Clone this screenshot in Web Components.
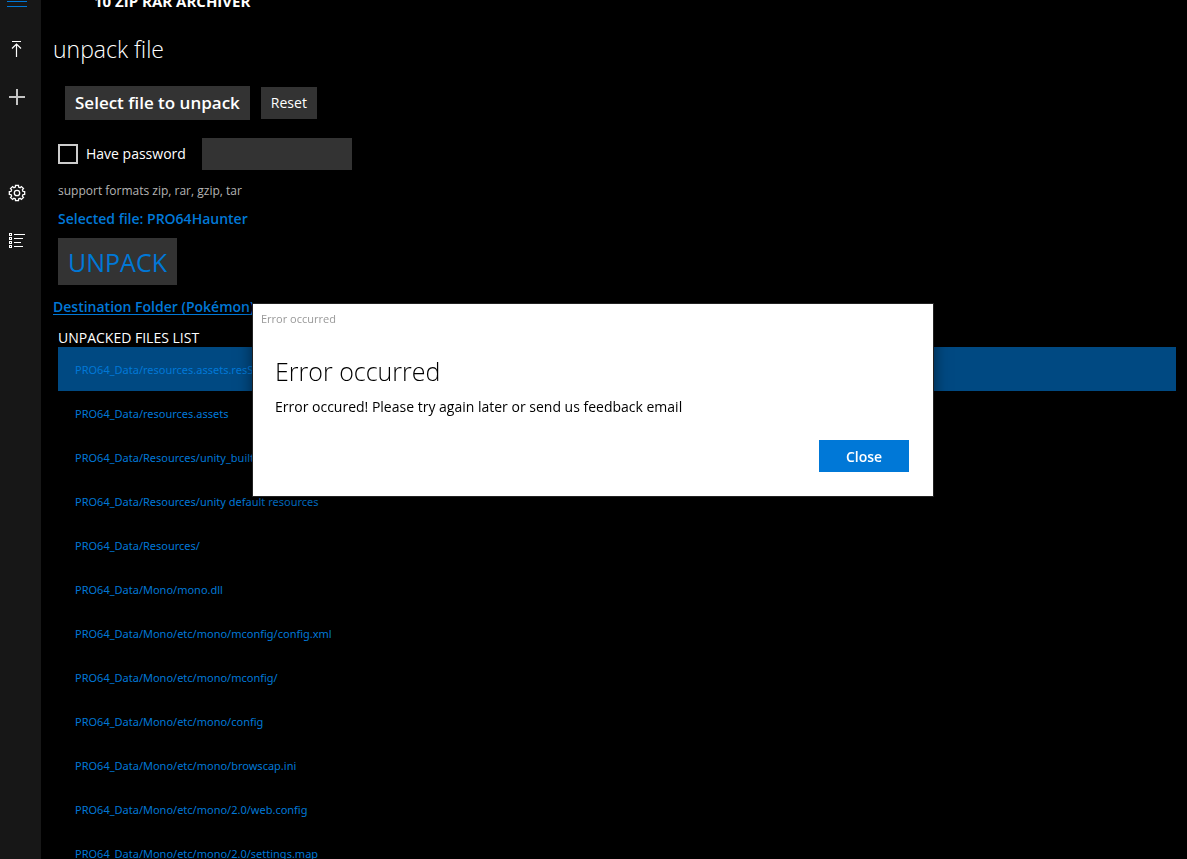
<!DOCTYPE html>
<html lang="en">
<head>
<meta charset="utf-8">
<title>10 ZIP RAR ARCHIVER</title>
<style>
  html, body { margin: 0; height: 100%; background: #000; }
  body { overflow: hidden; color: #fff; font-family: "Open Sans", "Noto Sans", sans-serif; font-size: 14px; line-height: 20px; }
</style>
</head>
<body>
<archiver-app></archiver-app>

<template id="app-tpl">
  <style>
    :host { display: flex; height: 100vh; overflow: hidden; --accent: #0078d7; --control: #333; }
    main { flex: 1; min-width: 0; padding-right: 11px; }
    header { display: flex; align-items: flex-end; height: 11px; overflow: hidden; padding-left: 53px; font-size: 15px; font-weight: 700; }
  </style>
  <nav-rail></nav-rail>
  <main>
    <header>10 ZIP RAR ARCHIVER</header>
    <unpack-panel></unpack-panel>
    <file-list></file-list>
  </main>
  <message-dialog caption="Error occurred">
    <span slot="title">Error occurred</span>
    Error occured! Please try again later or send us feedback email
  </message-dialog>
</template>

<template id="rail-tpl">
  <style>
    :host { display: block; flex: none; width: 41px; background: #171717; }
    nav { display: flex; flex-direction: column; width: 34px; }
    button { display: flex; align-items: center; justify-content: center; height: 48px; padding: 0; border: 0; background: none; color: #fff; }
    .menu { height: 25px; align-items: flex-start; color: var(--accent); }
    .settings { margin-top: 48px; }
    svg { display: block; fill: none; stroke: currentColor; }
  </style>
  <nav aria-label="Main">
    <button class="menu" aria-label="Menu"><svg width="20" height="8" shape-rendering="crispEdges"><path d="M0 1.5h20M0 6.5h20"/></svg></button>
    <button aria-label="Unpack"><svg width="18" height="18"><path d="M4 1.5h9M8.500 4v13M4 8.500l4.500-4.500 4.500 4.500" stroke-width="1.200"/></svg></button>
    <button aria-label="Add"><svg width="18" height="18"><path d="M1 9h16M9 1v16" stroke="#c4c4c4" stroke-width="2"/></svg></button>
    <button class="settings" aria-label="Settings"><svg width="18" height="18" id="gear"><circle cx="9" cy="9" r="2.700" stroke-width="1.300"/></svg></button>
    <button aria-label="List"><svg width="18" height="18" shape-rendering="crispEdges"><path d="M1.500 1.500h2v2h-2zM1.500 5.500h2v2h-2zM1.500 9.500h2v2h-2zM1.500 13.500h2v2h-2zM6 2.500h11M6 6.500h9M6 10.500h7M6 14.500h9"/></svg></button>
  </nav>
</template>

<template id="panel-tpl">
  <style>
    :host { display: block; padding: 0 0 0 12px; }
    h1 { margin: 0; padding: 22px 0 21px; font-size: 23px; font-weight: 300; line-height: 32px; }
    button { border: 0; background: var(--control); color: #fff; font: inherit; padding: 0 10px; height: 32px; white-space: nowrap; }
    .pick { display: flex; align-items: center; gap: 11px; padding-left: 12px; }
    .pick .select { height: 34px; font-size: 17px; font-weight: 600; }
    .password { display: flex; align-items: center; padding: 18px 0 11px 5px; }
    .password label { display: flex; align-items: center; gap: 8px; width: 144px; }
    input[type=checkbox] { appearance: none; box-sizing: border-box; width: 20px; height: 20px; margin: 0; border: 2px solid #ccc; }
    input[type=password] { box-sizing: border-box; width: 150px; height: 32px; border: 0; padding: 0 8px; background: var(--control); color: #fff; font: inherit; }
    p { margin: 0; padding-left: 5px; }
    .formats { font-size: 12px; color: #b4b4b4; }
    .selected { padding-top: 7px; line-height: 22px; font-weight: 600; color: var(--accent); }
    .unpack { display: block; height: 47px; margin: 8px 0 12px 5px; font-size: 25px; color: var(--accent); }
    a { color: var(--accent); font-weight: 600; text-decoration: underline; text-underline-offset: 2px; text-decoration-thickness: 1px; text-decoration-skip-ink: none; }
  </style>
  <h1>unpack file</h1>
  <div class="pick"><button class="select">Select file to unpack</button><button>Reset</button></div>
  <div class="password">
    <label><input type="checkbox">Have password</label>
    <input type="password" aria-label="Password">
  </div>
  <p class="formats">support formats zip, rar, gzip, tar</p>
  <p class="selected">Selected file: PRO64Haunter</p>
  <button class="unpack">UNPACK</button>
  <a href="#destination">Destination Folder (Pokémon)</a>
</template>

<template id="list-tpl">
  <style>
    :host { display: block; padding: 11px 0 0 17px; }
    h2 { margin: 0; font-size: 14px; font-weight: 400; line-height: 19px; }
    ul { list-style: none; margin: 0; padding: 0; font-family: "Noto Sans", "Open Sans", sans-serif; font-size: 11px; color: var(--accent); }
    li { box-sizing: border-box; height: 44px; line-height: 42px; padding: 2px 0 0 17px; }
    li[aria-current] { background: #004982; }
  </style>
  <h2>UNPACKED FILES LIST</h2>
  <ul></ul>
</template>

<template id="dialog-tpl">
  <style>
    :host { position: fixed; inset: 0; display: flex; align-items: center; justify-content: center; padding: 0 1px 59px 0; }
    section { box-sizing: border-box; width: 682px; max-width: 100%; padding: 4px 24px 24px 22px; border: 1px solid #222; background: #fff; color: #000; box-shadow: 0 2px 14px rgba(0,0,0,.5); }
    .caption { margin: 0 0 21px -14px; font-size: 11px; line-height: 22px; color: #999; }
    h2 { margin: 0; font-size: 25px; font-weight: 300; line-height: 40px; }
    p { margin: 6px 0 23px; line-height: 20px; }
    footer { display: flex; justify-content: flex-end; }
    button { width: 90px; height: 32px; border: 0; padding: 1px 0 0; background: var(--accent); color: #fff; font: inherit; font-weight: 600; }
  </style>
  <section role="dialog" aria-labelledby="title">
    <div class="caption"></div>
    <h2 id="title"><slot name="title"></slot></h2>
    <p><slot></slot></p>
    <footer><button>Close</button></footer>
  </section>
</template>

<script>
  class TemplateElement extends HTMLElement {
    connectedCallback() {
      if (this.shadowRoot) return;
      const tpl = document.getElementById(this.constructor.template);
      this.attachShadow({ mode: "open" }).append(tpl.content.cloneNode(true));
      this.render(this.shadowRoot);
    }
    render() {}
  }

  class NavRail extends TemplateElement {
    static template = "rail-tpl";
    // Traces the cog outline: eight teeth around a common centre.
    render(root) {
      const points = [];
      for (let i = 0; i < 8; i++) {
        const a = i * 45;
        for (const [offset, radius] of [[-15, 6.2], [-11, 7.8], [11, 7.8], [15, 6.2]]) {
          const t = (a + offset) * Math.PI / 180;
          points.push((9 + radius * Math.sin(t)).toFixed(2) + " " + (9 - radius * Math.cos(t)).toFixed(2));
        }
      }
      const path = document.createElementNS("http://www.w3.org/2000/svg", "path");
      path.setAttribute("d", "M" + points.join("L") + "Z");
      path.setAttribute("stroke-width", "1.3");
      root.getElementById("gear").append(path);
    }
  }

  class UnpackPanel extends TemplateElement {
    static template = "panel-tpl";
  }

  class FileList extends TemplateElement {
    static template = "list-tpl";
    render(root) {
      const files = ["resources.assets.resS", "resources.assets", "Resources/unity_builtin_extra",
        "Resources/unity default resources", "Resources/", "Mono/mono.dll",
        "Mono/etc/mono/mconfig/config.xml", "Mono/etc/mono/mconfig/", "Mono/etc/mono/config",
        "Mono/etc/mono/browscap.ini", "Mono/etc/mono/2.0/web.config", "Mono/etc/mono/2.0/settings.map"];
      const list = root.querySelector("ul");
      files.forEach((name, i) => {
        const li = document.createElement("li");
        li.textContent = "PRO64_Data/" + name;
        if (i === 0) li.setAttribute("aria-current", "true");
        list.append(li);
      });
    }
  }

  class MessageDialog extends TemplateElement {
    static template = "dialog-tpl";
    render(root) {
      root.querySelector(".caption").textContent = this.getAttribute("caption");
      root.querySelector("button").addEventListener("click", () => this.remove());
    }
  }

  class ArchiverApp extends TemplateElement {
    static template = "app-tpl";
  }

  customElements.define("nav-rail", NavRail);
  customElements.define("unpack-panel", UnpackPanel);
  customElements.define("file-list", FileList);
  customElements.define("message-dialog", MessageDialog);
  customElements.define("archiver-app", ArchiverApp);
</script>
</body>
</html>
